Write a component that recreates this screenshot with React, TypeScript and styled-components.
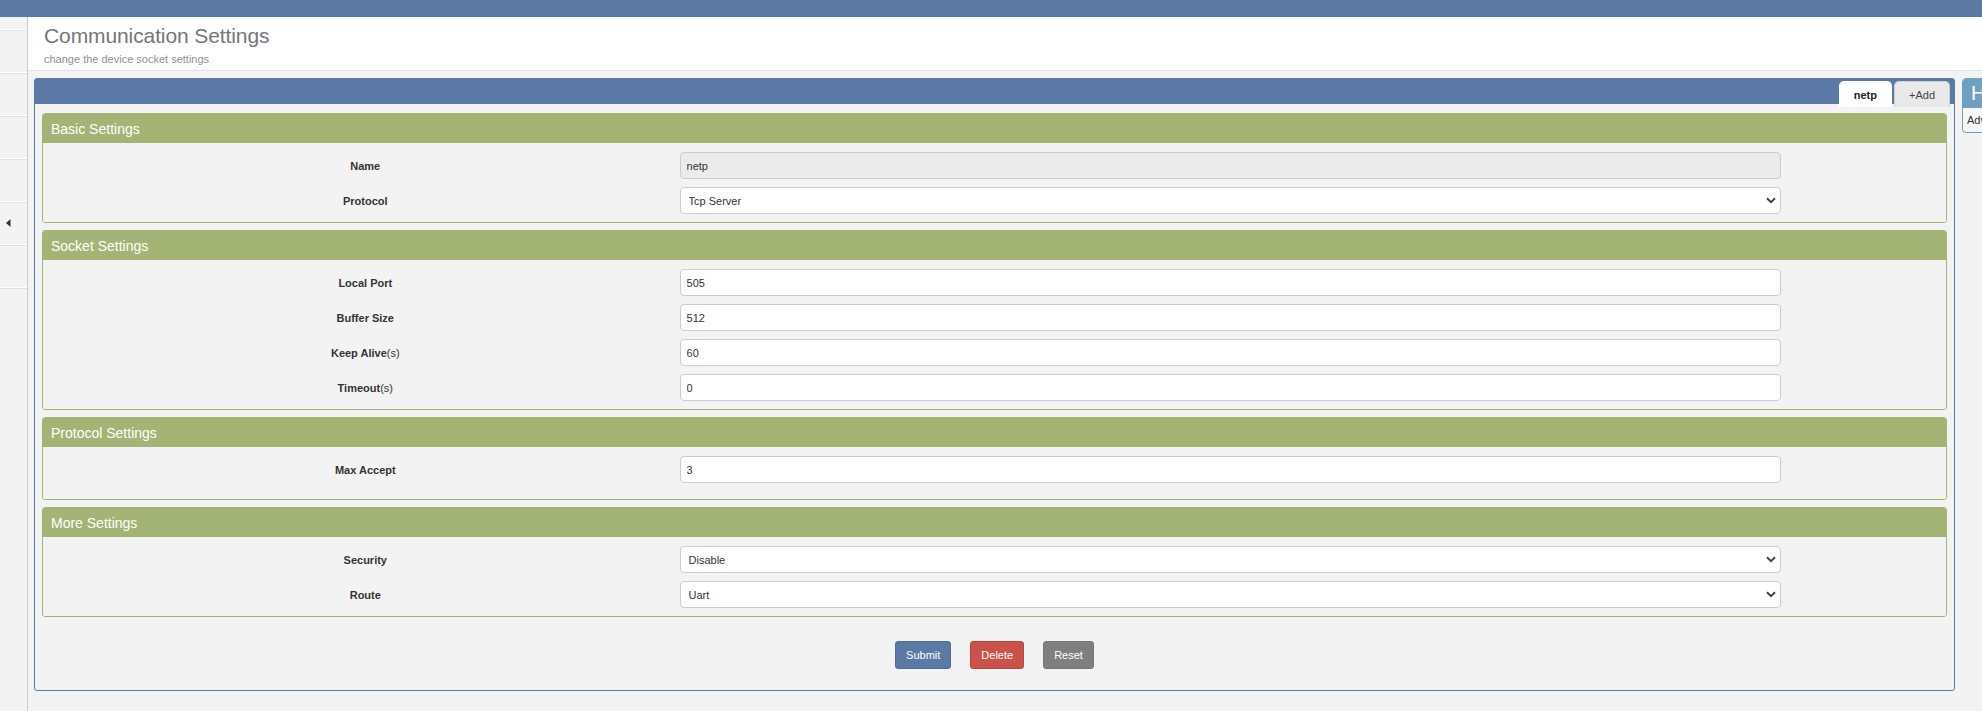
import React from "react";
import styled, { createGlobalStyle } from "styled-components";

const GlobalStyle = createGlobalStyle`
  html, body {
    margin: 0;
    padding: 0;
    background: #f3f3f3;
    overflow: hidden;
  }
  body {
    font-family: "Liberation Sans", Arial, Helvetica, sans-serif;
    color: #333333;
  }
  * {
    box-sizing: border-box;
  }
`;

type Field =
  | { kind: "input"; label: string; unit?: string; value: string; readOnly?: boolean }
  | { kind: "select"; label: string; unit?: string; value: string; options: string[] };

type Section = { title: string; fields: Field[]; extraBottom?: boolean };

const sections: Section[] = [
  {
    title: "Basic Settings",
    fields: [
      { kind: "input", label: "Name", value: "netp", readOnly: true },
      { kind: "select", label: "Protocol", value: "Tcp Server", options: ["Tcp Server", "Tcp Client", "Udp Server", "Udp Client", "Httpd Client"] },
    ],
  },
  {
    title: "Socket Settings",
    fields: [
      { kind: "input", label: "Local Port", value: "505" },
      { kind: "input", label: "Buffer Size", value: "512" },
      { kind: "input", label: "Keep Alive", unit: "(s)", value: "60" },
      { kind: "input", label: "Timeout", unit: "(s)", value: "0" },
    ],
  },
  {
    title: "Protocol Settings",
    extraBottom: true,
    fields: [{ kind: "input", label: "Max Accept", value: "3" }],
  },
  {
    title: "More Settings",
    fields: [
      { kind: "select", label: "Security", value: "Disable", options: ["Disable", "TLS"] },
      { kind: "select", label: "Route", value: "Uart", options: ["Uart", "None"] },
    ],
  },
];

// sidebar: a short first row, then 43px rows; the collapse arrow sits in the sixth
const sideRows = [false, false, false, false, false, true, false];

export default function App() {
  return (
    <>
      <GlobalStyle />
      <TopBar />
      <Layout>
        <Sidebar>
          {sideRows.map((arrow, i) => (
            <SideItem key={i} $first={i === 0}>
              {arrow && (
                <svg width="5" height="8" viewBox="0 0 5 8">
                  <path d="M4.5 0 L0 4 L4.5 8 Z" fill="#333" />
                </svg>
              )}
            </SideItem>
          ))}
        </Sidebar>
        <Main>
          <PageHeader>
            <Title>Communication Settings</Title>
            <Subtitle>change the device socket settings</Subtitle>
          </PageHeader>
          <ContentRow>
            <Panel>
              <PanelHeader>
                <Tabs>
                  <Tab $active>netp</Tab>
                  <Tab>+Add</Tab>
                </Tabs>
              </PanelHeader>
              <PanelBody>
                {sections.map((s) => (
                  <SectionBox key={s.title}>
                    <SectionHeader>{s.title}</SectionHeader>
                    <SectionBody $extraBottom={s.extraBottom}>
                      {s.fields.map((f) => (
                        <FormRow key={f.label}>
                          <Label>
                            <b>{f.label}</b>
                            {f.unit}
                          </Label>
                          {f.kind === "input" ? (
                            <TextInput defaultValue={f.value} readOnly={f.readOnly} $readOnly={f.readOnly} />
                          ) : (
                            <SelectWrap>
                              <Select defaultValue={f.value}>
                                {f.options.map((o) => (
                                  <option key={o}>{o}</option>
                                ))}
                              </Select>
                              <Chevron width="10" height="7" viewBox="0 0 10 7">
                                <path d="M1 1.2 L5 5.2 L9 1.2" fill="none" stroke="#444" strokeWidth="2" />
                              </Chevron>
                            </SelectWrap>
                          )}
                        </FormRow>
                      ))}
                    </SectionBody>
                  </SectionBox>
                ))}
                <Actions>
                  <ActionButton $tone="primary">Submit</ActionButton>
                  <ActionButton $tone="danger">Delete</ActionButton>
                  <ActionButton $tone="neutral">Reset</ActionButton>
                </Actions>
              </PanelBody>
            </Panel>
            <HelpPanel>
              <HelpHeader>H</HelpHeader>
              <HelpBody>Adv</HelpBody>
            </HelpPanel>
          </ContentRow>
        </Main>
      </Layout>
    </>
  );
}

const TopBar = styled.div`
  height: 17px;
  background: #5b79a5;
`;

const Layout = styled.div`
  display: flex;
  min-height: 694px;
`;

const Sidebar = styled.aside`
  flex: 0 0 28px;
  display: flex;
  flex-direction: column;
  background: #f3f3f3;
  border-right: 1px solid #cccccc;
`;

const SideItem = styled.div<{ $first?: boolean }>`
  display: flex;
  align-items: center;
  justify-content: flex-start;
  flex: 0 0 ${(p) => (p.$first ? "13px" : "43px")};
  padding-left: 6px;
  border-bottom: 1px solid #ffffff;
  box-shadow: 0 1px 0 #e2e2e2;
`;

const Main = styled.main`
  flex: 1;
  min-width: 0;
  display: flex;
  flex-direction: column;
`;

const PageHeader = styled.header`
  height: 54px;
  padding: 4px 16px 0;
  background: #ffffff;
  border-bottom: 1px solid #e3e3e3;
`;

const Title = styled.h1`
  margin: 0;
  font-family: "Liberation Sans", Arial, sans-serif;
  font-size: 21px;
  font-weight: 400;
  line-height: 30px;
  color: #767676;
  letter-spacing: -0.1px;
`;

const Subtitle = styled.div`
  margin-top: 2px;
  font-size: 11px;
  color: #8f8f8f;
`;

const ContentRow = styled.div`
  display: flex;
  align-items: flex-start;
  gap: 7px;
  margin: 7px -180px 0 6px;
`;

const Panel = styled.section`
  flex: 1;
  min-width: 0;
  border: 1px solid #5b79a5;
  border-radius: 3px;
  background: #f3f3f3;
`;

const PanelHeader = styled.div`
  display: flex;
  justify-content: flex-end;
  align-items: flex-end;
  height: 25px;
  padding-right: 4px;
  background: #5b79a5;
`;

const Tabs = styled.div`
  display: flex;
  gap: 2px;
  margin-bottom: -3px;
`;

const Tab = styled.div<{ $active?: boolean }>`
  display: flex;
  align-items: center;
  justify-content: center;
  height: 26px;
  padding: 0 ${(p) => (p.$active ? "14px" : "14px")};
  border: 1px solid ${(p) => (p.$active ? "#ffffff" : "#cfcfcf")};
  border-bottom: none;
  border-radius: 5px 5px 0 0;
  background: ${(p) => (p.$active ? "#ffffff" : "#e9e9e9")};
  font-size: 11px;
  font-weight: ${(p) => (p.$active ? 700 : 400)};
  color: ${(p) => (p.$active ? "#222222" : "#444444")};
`;

const PanelBody = styled.div`
  padding: 9px 7px 21px;
`;

const SectionBox = styled.div`
  border: 1px solid #a3b474;
  border-radius: 3px;
  overflow: hidden;
  & + & {
    margin-top: 7px;
  }
`;

const SectionHeader = styled.div`
  height: 29px;
  display: flex;
  align-items: center;
  padding-left: 8px;
  background: #a3b474;
  font-size: 14px;
  color: #ffffff;
`;

const SectionBody = styled.div<{ $extraBottom?: boolean }>`
  display: flex;
  flex-direction: column;
  gap: 8px;
  padding: 9px 0 ${(p) => (p.$extraBottom ? "16px" : "8px")};
  background: #f3f3f3;
`;

const FormRow = styled.div`
  display: grid;
  grid-template-columns: 33.45% 57.9% 1fr;
  align-items: center;
`;

const Label = styled.label`
  padding-left: 8px;
  text-align: center;
  font-size: 11px;
  color: #333333;

  b {
    font-weight: 700;
  }
`;

const TextInput = styled.input<{ $readOnly?: boolean }>`
  width: 100%;
  height: 27px;
  padding: 0 6px;
  border: 1px solid #cccccc;
  border-radius: 4px;
  background: ${(p) => (p.$readOnly ? "#ebebeb" : "#ffffff")};
  font-family: "Liberation Sans", Arial, sans-serif;
  font-size: 11px;
  color: #333333;
  outline: none;
`;

const SelectWrap = styled.div`
  position: relative;
  width: 100%;
`;

const Select = styled.select`
  width: 100%;
  height: 27px;
  padding: 0 24px 0 8px;
  border: 1px solid #cccccc;
  border-radius: 4px;
  background: #ffffff;
  font-family: "Liberation Sans", Arial, sans-serif;
  font-size: 11px;
  color: #333333;
  appearance: none;
  -webkit-appearance: none;
  outline: none;
`;

const Chevron = styled.svg`
  position: absolute;
  right: 5px;
  top: 10px;
  pointer-events: none;
`;

const Actions = styled.div`
  display: flex;
  justify-content: center;
  gap: 19px;
  margin-top: 24px;
`;

const tones = {
  primary: { bg: "#5b79a5", border: "#4f6d99" },
  danger: { bg: "#c9524a", border: "#bd463f" },
  neutral: { bg: "#7f7f7f", border: "#767676" },
};

const ActionButton = styled.button<{ $tone: keyof typeof tones }>`
  height: 28px;
  padding: 0 10px;
  border: 1px solid ${(p) => tones[p.$tone].border};
  border-radius: 3px;
  background: ${(p) => tones[p.$tone].bg};
  font-family: "Liberation Sans", Arial, sans-serif;
  font-size: 11px;
  color: #ffffff;
  cursor: pointer;
`;

const HelpPanel = styled.aside`
  flex: 0 0 200px;
  border: 1px solid #6fa0bf;
  border-radius: 4px;
  overflow: hidden;
  background: #f7f7f7;
`;

const HelpHeader = styled.div`
  height: 29px;
  display: flex;
  align-items: center;
  padding-left: 8px;
  background: #6fa0bf;
  font-size: 20px;
  color: #ffffff;
`;

const HelpBody = styled.div`
  height: 24px;
  display: flex;
  align-items: center;
  padding-left: 4px;
  font-size: 11px;
  color: #333333;
`;
